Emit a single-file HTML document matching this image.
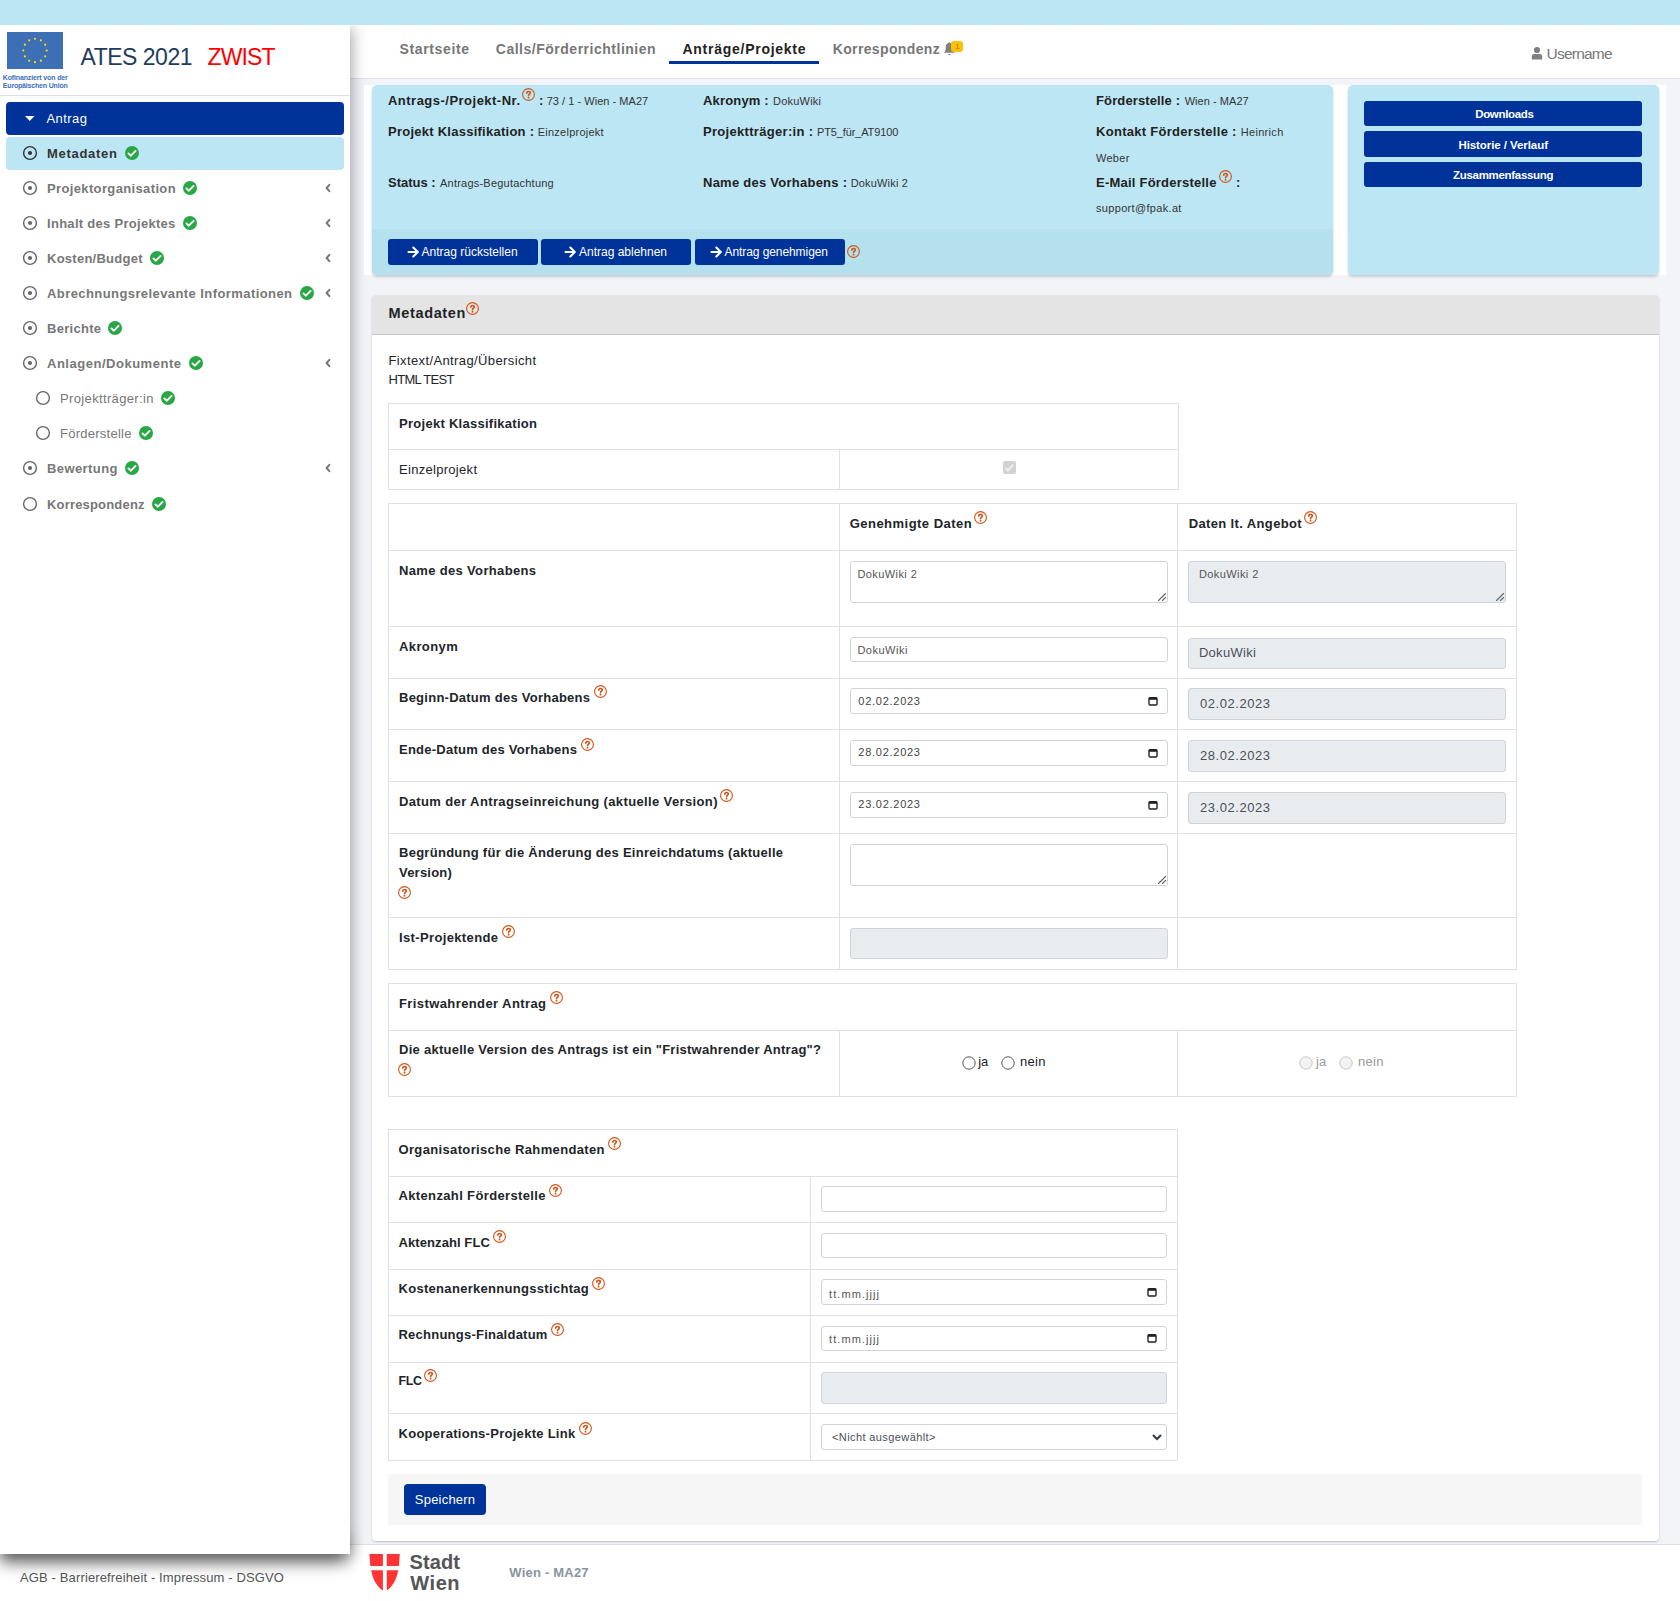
<!DOCTYPE html>
<html><head><meta charset="utf-8"><title>ATES 2021 ZWIST - Metadaten</title>
<style>
html,body{margin:0;padding:0}
body{width:1680px;height:1601px;position:relative;overflow:hidden;background:#f3f4f8;font-family:"Liberation Sans",sans-serif}
.t{position:absolute;white-space:nowrap;line-height:1}
svg{display:block}
</style></head><body>
<div style="position:absolute;left:0;top:0;width:1680px;height:25px;background:#bde6f5;z-index:5"></div><div style="position:absolute;left:0;top:24px;width:1680px;height:1px;z-index:6;background:repeating-linear-gradient(90deg,transparent 0 2px,#e9e3a6 2px 3px,transparent 3px 10px)"></div>
<div style="position:absolute;left:350px;top:25px;width:1330px;height:53px;background:#fff;border-bottom:1px solid #dee2e6"></div>
<div style="position:absolute;left:0px;top:1544px;width:1680px;height:57px;background:#fff;border-top:1px solid #dee2e6;box-sizing:border-box"></div>
<div style="position:absolute;left:364px;top:85px;width:1302px;height:190px;background:#fff"></div>
<div style="position:absolute;left:372px;top:85px;width:961px;height:190px;background:#bde6f5;border-radius:5px;box-shadow:0 2px 3px rgba(0,0,0,.18);overflow:hidden"></div>
<div style="position:absolute;left:372px;top:229px;width:961px;height:46px;background:#b5e0ee;border-radius:0 0 5px 5px"></div>
<div style="position:absolute;left:1348px;top:85px;width:311px;height:190px;background:#bde6f5;border-radius:5px;box-shadow:0 2px 3px rgba(0,0,0,.18)"></div>
<div style="position:absolute;left:372px;top:295px;width:1287px;height:1246px;background:#fff;border-radius:4px;box-shadow:0 1px 2px rgba(0,0,0,.22);"></div>
<div style="position:absolute;left:372px;top:295px;width:1287px;height:39px;background:#e4e4e4;border-bottom:1px solid #c9c9c9;border-radius:4px 4px 0 0"></div>
<div style="position:absolute;left:388px;top:1474px;width:1254px;height:51px;background:#f6f6f6"></div>
<div id="t0" class="t" style="left:388px;top:94.00px;font-size:13px;font-weight:700;color:#222;letter-spacing:0.484px;">Antrags-/Projekt-Nr.</div>
<div id="t1" class="t" style="left:546.7px;top:95.69px;font-size:11px;font-weight:400;color:#333;letter-spacing:0.033px;">73 / 1 - Wien - MA27</div>
<svg style="position:absolute;left:522.4px;top:87.7px;" width="13" height="13" viewBox="0 0 13 13"><circle cx="6.5" cy="6.5" r="5.9" fill="none" stroke="#d2581a" stroke-width="1.15"/><path d="M4.75,5.2 C4.75,4.1 5.5,3.45 6.5,3.45 C7.5,3.45 8.3,4.05 8.3,5 C8.3,6.15 6.55,6.35 6.55,7.75" fill="none" stroke="#d2581a" stroke-width="1.65" stroke-linecap="round"/><circle cx="6.55" cy="9.65" r="0.95" fill="#d2581a"/></svg>
<div id="t2" class="t" style="left:539px;top:94.00px;font-size:13px;font-weight:700;color:#222;letter-spacing:0.000px;">:</div>
<div id="t3" class="t" style="left:388px;top:125.00px;font-size:13px;font-weight:700;color:#222;letter-spacing:0.254px;">Projekt Klassifikation :</div>
<div id="t4" class="t" style="left:537.7px;top:126.69px;font-size:11px;font-weight:400;color:#333;letter-spacing:0.251px;">Einzelprojekt</div>
<div id="t5" class="t" style="left:388px;top:176.00px;font-size:13px;font-weight:700;color:#222;letter-spacing:-0.012px;">Status :</div>
<div id="t6" class="t" style="left:440px;top:177.69px;font-size:11px;font-weight:400;color:#333;letter-spacing:0.223px;">Antrags-Begutachtung</div>
<div id="t7" class="t" style="left:703px;top:94.00px;font-size:13px;font-weight:700;color:#222;letter-spacing:0.175px;">Akronym :</div>
<div id="t8" class="t" style="left:773px;top:95.69px;font-size:11px;font-weight:400;color:#333;letter-spacing:0.221px;">DokuWiki</div>
<div id="t9" class="t" style="left:703px;top:125.00px;font-size:13px;font-weight:700;color:#222;letter-spacing:0.309px;">Projektträger:in :</div>
<div id="t10" class="t" style="left:817px;top:126.69px;font-size:11px;font-weight:400;color:#333;letter-spacing:-0.128px;">PT5_für_AT9100</div>
<div id="t11" class="t" style="left:703px;top:176.00px;font-size:13px;font-weight:700;color:#222;letter-spacing:0.252px;">Name des Vorhabens :</div>
<div id="t12" class="t" style="left:850.7px;top:177.69px;font-size:11px;font-weight:400;color:#333;letter-spacing:0.175px;">DokuWiki 2</div>
<div id="t13" class="t" style="left:1096px;top:94.00px;font-size:13px;font-weight:700;color:#222;letter-spacing:0.126px;">Förderstelle :</div>
<div id="t14" class="t" style="left:1184.7px;top:95.69px;font-size:11px;font-weight:400;color:#333;letter-spacing:0.042px;">Wien - MA27</div>
<div id="t15" class="t" style="left:1096px;top:125.00px;font-size:13px;font-weight:700;color:#222;letter-spacing:0.288px;">Kontakt Förderstelle :</div>
<div id="t16" class="t" style="left:1240.7px;top:126.69px;font-size:11px;font-weight:400;color:#333;letter-spacing:0.320px;">Heinrich</div>
<div id="t17" class="t" style="left:1096px;top:152.69px;font-size:11px;font-weight:400;color:#333;letter-spacing:0.273px;">Weber</div>
<div id="t18" class="t" style="left:1096px;top:176.00px;font-size:13px;font-weight:700;color:#222;letter-spacing:0.227px;">E-Mail Förderstelle</div>
<svg style="position:absolute;left:1219.4px;top:169.7px;" width="13" height="13" viewBox="0 0 13 13"><circle cx="6.5" cy="6.5" r="5.9" fill="none" stroke="#d2581a" stroke-width="1.15"/><path d="M4.75,5.2 C4.75,4.1 5.5,3.45 6.5,3.45 C7.5,3.45 8.3,4.05 8.3,5 C8.3,6.15 6.55,6.35 6.55,7.75" fill="none" stroke="#d2581a" stroke-width="1.65" stroke-linecap="round"/><circle cx="6.55" cy="9.65" r="0.95" fill="#d2581a"/></svg>
<div id="t19" class="t" style="left:1236px;top:176.00px;font-size:13px;font-weight:700;color:#222;letter-spacing:0.000px;">:</div>
<div id="t20" class="t" style="left:1096px;top:202.69px;font-size:11px;font-weight:400;color:#333;letter-spacing:0.322px;">support@fpak.at</div>
<div style="position:absolute;left:388px;top:239px;width:150px;height:26px;background:#003399;border-radius:3px"></div>
<svg style="position:absolute;left:406.5px;top:245.5px;" width="13" height="12" viewBox="0 0 13 12"><path d="M1.5,6 H10.5 M6.3,1.6 L10.8,6 L6.3,10.4" fill="none" stroke="#fff" stroke-width="2.1" stroke-linecap="round" stroke-linejoin="round"/></svg>
<div id="t21" class="t" style="left:421.6px;top:245.84px;font-size:12px;font-weight:400;color:#fff;letter-spacing:-0.003px;">Antrag rückstellen</div>
<div style="position:absolute;left:541px;top:239px;width:150px;height:26px;background:#003399;border-radius:3px"></div>
<svg style="position:absolute;left:563.5px;top:245.5px;" width="13" height="12" viewBox="0 0 13 12"><path d="M1.5,6 H10.5 M6.3,1.6 L10.8,6 L6.3,10.4" fill="none" stroke="#fff" stroke-width="2.1" stroke-linecap="round" stroke-linejoin="round"/></svg>
<div id="t22" class="t" style="left:579px;top:245.84px;font-size:12px;font-weight:400;color:#fff;letter-spacing:-0.005px;">Antrag ablehnen</div>
<div style="position:absolute;left:695px;top:239px;width:150px;height:26px;background:#003399;border-radius:3px"></div>
<svg style="position:absolute;left:709.5px;top:245.5px;" width="13" height="12" viewBox="0 0 13 12"><path d="M1.5,6 H10.5 M6.3,1.6 L10.8,6 L6.3,10.4" fill="none" stroke="#fff" stroke-width="2.1" stroke-linecap="round" stroke-linejoin="round"/></svg>
<div id="t23" class="t" style="left:724.5px;top:245.84px;font-size:12px;font-weight:400;color:#fff;letter-spacing:-0.078px;">Antrag genehmigen</div>
<svg style="position:absolute;left:847.4px;top:244.7px;" width="13" height="13" viewBox="0 0 13 13"><circle cx="6.5" cy="6.5" r="5.9" fill="none" stroke="#d2581a" stroke-width="1.15"/><path d="M4.75,5.2 C4.75,4.1 5.5,3.45 6.5,3.45 C7.5,3.45 8.3,4.05 8.3,5 C8.3,6.15 6.55,6.35 6.55,7.75" fill="none" stroke="#d2581a" stroke-width="1.65" stroke-linecap="round"/><circle cx="6.55" cy="9.65" r="0.95" fill="#d2581a"/></svg>
<div style="position:absolute;left:1364px;top:101px;width:278px;height:25px;background:#003399;border-radius:3px"></div>
<div id="t24" class="t" style="left:1475.2px;top:109.07px;font-size:11.5px;font-weight:700;color:#fff;letter-spacing:-0.329px;">Downloads</div>
<div style="position:absolute;left:1364px;top:131px;width:278px;height:26px;background:#003399;border-radius:3px"></div>
<div id="t25" class="t" style="left:1458.4px;top:140.07px;font-size:11.5px;font-weight:700;color:#fff;letter-spacing:-0.068px;">Historie / Verlauf</div>
<div style="position:absolute;left:1364px;top:162px;width:278px;height:25px;background:#003399;border-radius:3px"></div>
<div id="t26" class="t" style="left:1453px;top:170.07px;font-size:11.5px;font-weight:700;color:#fff;letter-spacing:-0.301px;">Zusammenfassung</div>
<div id="t27" class="t" style="left:399.5px;top:42.15px;font-size:14px;font-weight:700;color:#777;letter-spacing:0.632px;">Startseite</div>
<div id="t28" class="t" style="left:495.8px;top:42.15px;font-size:14px;font-weight:700;color:#777;letter-spacing:0.509px;">Calls/Förderrichtlinien</div>
<div id="t29" class="t" style="left:682.5px;top:42.15px;font-size:14px;font-weight:700;color:#222;letter-spacing:0.731px;">Anträge/Projekte</div>
<div style="position:absolute;left:669px;top:61px;width:150px;height:3px;background:#003399"></div>
<div id="t30" class="t" style="left:832.7px;top:42.15px;font-size:14px;font-weight:700;color:#777;letter-spacing:0.360px;">Korrespondenz</div>
<svg style="position:absolute;left:943px;top:41px;" width="14" height="16" viewBox="0 0 14 16"><path d="M1,11.7 C2.6,10 2.8,8 2.8,6 C2.8,3.6 4.3,2.2 6,1.8 V1.2 H7 V1.8 C8.7,2.2 10.2,3.6 10.2,6 C10.2,8 10.4,10 12,11.7 Z" fill="#808080"/><path d="M5.2,13 H7.8 A1.3,1.3 0 0 1 5.2,13Z" fill="#808080"/></svg>
<div style="position:absolute;left:951px;top:41px;width:12px;height:11px;background:#ffc107;border-radius:3px"></div>
<div id="t31" class="t" style="left:955.2px;top:42.73px;font-size:8px;font-weight:400;color:#9a7a00;letter-spacing:0.000px;">1</div>
<svg style="position:absolute;left:1531px;top:45px;" width="12" height="15" viewBox="0 0 12 15"><circle cx="6" cy="5" r="3.1" fill="#808080"/><path d="M0.8,14.4 V11.6 C0.8,9.9 2,9.1 3.4,9.1 H8.6 C10,9.1 11.2,9.9 11.2,11.6 V14.4 Z" fill="#808080"/></svg>
<div id="t32" class="t" style="left:1546.6px;top:46.18px;font-size:15.5px;font-weight:400;color:#777;letter-spacing:-0.787px;">Username</div>
<div id="t33" class="t" style="left:388.6px;top:305.73px;font-size:14.5px;font-weight:700;color:#212529;letter-spacing:0.635px;">Metadaten</div>
<svg style="position:absolute;left:465.9px;top:301.7px;" width="13" height="13" viewBox="0 0 13 13"><circle cx="6.5" cy="6.5" r="5.9" fill="none" stroke="#d2581a" stroke-width="1.15"/><path d="M4.75,5.2 C4.75,4.1 5.5,3.45 6.5,3.45 C7.5,3.45 8.3,4.05 8.3,5 C8.3,6.15 6.55,6.35 6.55,7.75" fill="none" stroke="#d2581a" stroke-width="1.65" stroke-linecap="round"/><circle cx="6.55" cy="9.65" r="0.95" fill="#d2581a"/></svg>
<div id="t34" class="t" style="left:388.5px;top:354.00px;font-size:13px;font-weight:400;color:#212529;letter-spacing:0.382px;">Fixtext/Antrag/Übersicht</div>
<div id="t35" class="t" style="left:388.5px;top:373.00px;font-size:13px;font-weight:400;color:#212529;letter-spacing:-0.689px;">HTML TEST</div>
<div style="position:absolute;left:388px;top:403px;width:791px;height:87px;border:1px solid #dee2e6;box-sizing:border-box"></div>
<div style="position:absolute;left:388px;top:449px;width:791px;height:1px;background:#dee2e6"></div>
<div style="position:absolute;left:839px;top:449px;width:1px;height:41px;background:#dee2e6"></div>
<div id="t36" class="t" style="left:399px;top:417.00px;font-size:13px;font-weight:700;color:#212529;letter-spacing:0.275px;">Projekt Klassifikation</div>
<div id="t37" class="t" style="left:399px;top:463.00px;font-size:13px;font-weight:400;color:#212529;letter-spacing:0.297px;">Einzelprojekt</div>
<svg style="position:absolute;left:1003px;top:461px;" width="13" height="13" viewBox="0 0 13 13"><rect x="0" y="0" width="13" height="13" rx="2" fill="#d2d2d2"/><polyline points="2.4,7.1 4.9,9.6 10.3,3.5" fill="none" stroke="#efefef" stroke-width="2"/></svg>
<div style="position:absolute;left:388px;top:503px;width:1129px;height:467px;border:1px solid #dee2e6;box-sizing:border-box"></div>
<div style="position:absolute;left:388px;top:550px;width:1129px;height:1px;background:#dee2e6"></div>
<div style="position:absolute;left:388px;top:626px;width:1129px;height:1px;background:#dee2e6"></div>
<div style="position:absolute;left:388px;top:678px;width:1129px;height:1px;background:#dee2e6"></div>
<div style="position:absolute;left:388px;top:729px;width:1129px;height:1px;background:#dee2e6"></div>
<div style="position:absolute;left:388px;top:781px;width:1129px;height:1px;background:#dee2e6"></div>
<div style="position:absolute;left:388px;top:833px;width:1129px;height:1px;background:#dee2e6"></div>
<div style="position:absolute;left:388px;top:917px;width:1129px;height:1px;background:#dee2e6"></div>
<div style="position:absolute;left:839px;top:503px;width:1px;height:467px;background:#dee2e6"></div>
<div style="position:absolute;left:1177px;top:503px;width:1px;height:467px;background:#dee2e6"></div>
<div id="t38" class="t" style="left:849.7px;top:516.60px;font-size:13px;font-weight:700;color:#212529;letter-spacing:0.475px;">Genehmigte Daten</div>
<svg style="position:absolute;left:974.4px;top:510.7px;" width="13" height="13" viewBox="0 0 13 13"><circle cx="6.5" cy="6.5" r="5.9" fill="none" stroke="#d2581a" stroke-width="1.15"/><path d="M4.75,5.2 C4.75,4.1 5.5,3.45 6.5,3.45 C7.5,3.45 8.3,4.05 8.3,5 C8.3,6.15 6.55,6.35 6.55,7.75" fill="none" stroke="#d2581a" stroke-width="1.65" stroke-linecap="round"/><circle cx="6.55" cy="9.65" r="0.95" fill="#d2581a"/></svg>
<div id="t39" class="t" style="left:1188.7px;top:516.60px;font-size:13px;font-weight:700;color:#212529;letter-spacing:0.367px;">Daten lt. Angebot</div>
<svg style="position:absolute;left:1304.4px;top:510.7px;" width="13" height="13" viewBox="0 0 13 13"><circle cx="6.5" cy="6.5" r="5.9" fill="none" stroke="#d2581a" stroke-width="1.15"/><path d="M4.75,5.2 C4.75,4.1 5.5,3.45 6.5,3.45 C7.5,3.45 8.3,4.05 8.3,5 C8.3,6.15 6.55,6.35 6.55,7.75" fill="none" stroke="#d2581a" stroke-width="1.65" stroke-linecap="round"/><circle cx="6.55" cy="9.65" r="0.95" fill="#d2581a"/></svg>
<div id="t40" class="t" style="left:399px;top:564.00px;font-size:13px;font-weight:700;color:#212529;letter-spacing:0.338px;">Name des Vorhabens</div>
<div style="position:absolute;left:850px;top:561px;width:318px;height:42px;background:#fff;border:1px solid #ced4da;border-radius:3px;box-sizing:border-box"></div>
<svg style="position:absolute;left:1156px;top:591px;" width="12" height="12" viewBox="0 0 12 12"><path d="M2.5,9.5 L9.6,2.5 M6.4,9.5 L9.6,6.5" stroke="#666" stroke-width="1.1" stroke-linecap="round"/></svg>
<div id="t41" class="t" style="left:857.4px;top:569.09px;font-size:11px;font-weight:400;color:#555;letter-spacing:0.419px;">DokuWiki 2</div>
<div style="position:absolute;left:1188px;top:561px;width:318px;height:42px;background:#e9ecef;border:1px solid #ced4da;border-radius:3px;box-sizing:border-box"></div>
<svg style="position:absolute;left:1494px;top:591px;" width="12" height="12" viewBox="0 0 12 12"><path d="M2.5,9.5 L9.6,2.5 M6.4,9.5 L9.6,6.5" stroke="#666" stroke-width="1.1" stroke-linecap="round"/></svg>
<div id="t42" class="t" style="left:1198.9px;top:569.09px;font-size:11px;font-weight:400;color:#555;letter-spacing:0.419px;">DokuWiki 2</div>
<div id="t43" class="t" style="left:399px;top:639.70px;font-size:13px;font-weight:700;color:#212529;letter-spacing:0.391px;">Akronym</div>
<div style="position:absolute;left:850px;top:637px;width:318px;height:25px;background:#fff;border:1px solid #ced4da;border-radius:3px;box-sizing:border-box"></div>
<div id="t44" class="t" style="left:857.4px;top:645.39px;font-size:11px;font-weight:400;color:#555;letter-spacing:0.507px;">DokuWiki</div>
<div style="position:absolute;left:1188px;top:638px;width:318px;height:31px;background:#e9ecef;border:1px solid #ced4da;border-radius:3px;box-sizing:border-box"></div>
<div id="t45" class="t" style="left:1198.9px;top:646.30px;font-size:13px;font-weight:400;color:#495057;letter-spacing:0.299px;">DokuWiki</div>
<div id="t46" class="t" style="left:399px;top:690.60px;font-size:13px;font-weight:700;color:#212529;letter-spacing:0.253px;">Beginn-Datum des Vorhabens</div>
<svg style="position:absolute;left:594.1999999999999px;top:685.3000000000001px;" width="13" height="13" viewBox="0 0 13 13"><circle cx="6.5" cy="6.5" r="5.9" fill="none" stroke="#d2581a" stroke-width="1.15"/><path d="M4.75,5.2 C4.75,4.1 5.5,3.45 6.5,3.45 C7.5,3.45 8.3,4.05 8.3,5 C8.3,6.15 6.55,6.35 6.55,7.75" fill="none" stroke="#d2581a" stroke-width="1.65" stroke-linecap="round"/><circle cx="6.55" cy="9.65" r="0.95" fill="#d2581a"/></svg>
<div style="position:absolute;left:850px;top:688px;width:318px;height:26px;background:#fff;border:1px solid #ced4da;border-radius:3px;box-sizing:border-box"></div>
<svg style="position:absolute;left:1147.5px;top:695.5px;" width="10" height="10" viewBox="0 0 10 10"><rect x="1" y="1.8" width="8" height="7.2" rx="1" fill="none" stroke="#222" stroke-width="1.4"/><rect x="1" y="1.8" width="8" height="2" fill="#222"/></svg>
<div id="t47" class="t" style="left:858.3px;top:696.49px;font-size:11px;font-weight:400;color:#444;letter-spacing:0.738px;">02.02.2023</div>
<div style="position:absolute;left:1188px;top:688px;width:318px;height:32px;background:#e9ecef;border:1px solid #ced4da;border-radius:3px;box-sizing:border-box"></div>
<div id="t48" class="t" style="left:1200px;top:697.30px;font-size:13px;font-weight:400;color:#495057;letter-spacing:0.547px;">02.02.2023</div>
<div id="t49" class="t" style="left:399px;top:743.00px;font-size:13px;font-weight:700;color:#212529;letter-spacing:0.243px;">Ende-Datum des Vorhabens</div>
<svg style="position:absolute;left:580.9px;top:737.7px;" width="13" height="13" viewBox="0 0 13 13"><circle cx="6.5" cy="6.5" r="5.9" fill="none" stroke="#d2581a" stroke-width="1.15"/><path d="M4.75,5.2 C4.75,4.1 5.5,3.45 6.5,3.45 C7.5,3.45 8.3,4.05 8.3,5 C8.3,6.15 6.55,6.35 6.55,7.75" fill="none" stroke="#d2581a" stroke-width="1.65" stroke-linecap="round"/><circle cx="6.55" cy="9.65" r="0.95" fill="#d2581a"/></svg>
<div style="position:absolute;left:850px;top:740px;width:318px;height:26px;background:#fff;border:1px solid #ced4da;border-radius:3px;box-sizing:border-box"></div>
<svg style="position:absolute;left:1147.5px;top:747.5px;" width="10" height="10" viewBox="0 0 10 10"><rect x="1" y="1.8" width="8" height="7.2" rx="1" fill="none" stroke="#222" stroke-width="1.4"/><rect x="1" y="1.8" width="8" height="2" fill="#222"/></svg>
<div id="t50" class="t" style="left:858.3px;top:747.39px;font-size:11px;font-weight:400;color:#444;letter-spacing:0.738px;">28.02.2023</div>
<div style="position:absolute;left:1188px;top:740px;width:318px;height:32px;background:#e9ecef;border:1px solid #ced4da;border-radius:3px;box-sizing:border-box"></div>
<div id="t51" class="t" style="left:1200px;top:749.00px;font-size:13px;font-weight:400;color:#495057;letter-spacing:0.547px;">28.02.2023</div>
<div id="t52" class="t" style="left:399px;top:794.70px;font-size:13px;font-weight:700;color:#212529;letter-spacing:0.370px;">Datum der Antragseinreichung (aktuelle Version)</div>
<svg style="position:absolute;left:720.4px;top:789.4000000000001px;" width="13" height="13" viewBox="0 0 13 13"><circle cx="6.5" cy="6.5" r="5.9" fill="none" stroke="#d2581a" stroke-width="1.15"/><path d="M4.75,5.2 C4.75,4.1 5.5,3.45 6.5,3.45 C7.5,3.45 8.3,4.05 8.3,5 C8.3,6.15 6.55,6.35 6.55,7.75" fill="none" stroke="#d2581a" stroke-width="1.65" stroke-linecap="round"/><circle cx="6.55" cy="9.65" r="0.95" fill="#d2581a"/></svg>
<div style="position:absolute;left:850px;top:792px;width:318px;height:26px;background:#fff;border:1px solid #ced4da;border-radius:3px;box-sizing:border-box"></div>
<svg style="position:absolute;left:1147.5px;top:799.5px;" width="10" height="10" viewBox="0 0 10 10"><rect x="1" y="1.8" width="8" height="7.2" rx="1" fill="none" stroke="#222" stroke-width="1.4"/><rect x="1" y="1.8" width="8" height="2" fill="#222"/></svg>
<div id="t53" class="t" style="left:858.3px;top:799.44px;font-size:11px;font-weight:400;color:#444;letter-spacing:0.738px;">23.02.2023</div>
<div style="position:absolute;left:1188px;top:792px;width:318px;height:32px;background:#e9ecef;border:1px solid #ced4da;border-radius:3px;box-sizing:border-box"></div>
<div id="t54" class="t" style="left:1200px;top:800.70px;font-size:13px;font-weight:400;color:#495057;letter-spacing:0.547px;">23.02.2023</div>
<div id="t55" class="t" style="left:399px;top:846.30px;font-size:13px;font-weight:700;color:#212529;letter-spacing:0.271px;">Begründung für die Änderung des Einreichdatums (aktuelle</div>
<div id="t56" class="t" style="left:399px;top:865.50px;font-size:13px;font-weight:700;color:#212529;letter-spacing:0.215px;">Version)</div>
<svg style="position:absolute;left:397.9px;top:886.2px;" width="13" height="13" viewBox="0 0 13 13"><circle cx="6.5" cy="6.5" r="5.9" fill="none" stroke="#d2581a" stroke-width="1.15"/><path d="M4.75,5.2 C4.75,4.1 5.5,3.45 6.5,3.45 C7.5,3.45 8.3,4.05 8.3,5 C8.3,6.15 6.55,6.35 6.55,7.75" fill="none" stroke="#d2581a" stroke-width="1.65" stroke-linecap="round"/><circle cx="6.55" cy="9.65" r="0.95" fill="#d2581a"/></svg>
<div style="position:absolute;left:850px;top:844px;width:318px;height:42px;background:#fff;border:1px solid #ced4da;border-radius:3px;box-sizing:border-box"></div>
<svg style="position:absolute;left:1156px;top:874px;" width="12" height="12" viewBox="0 0 12 12"><path d="M2.5,9.5 L9.6,2.5 M6.4,9.5 L9.6,6.5" stroke="#666" stroke-width="1.1" stroke-linecap="round"/></svg>
<div id="t57" class="t" style="left:399px;top:930.50px;font-size:13px;font-weight:700;color:#212529;letter-spacing:0.363px;">Ist-Projektende</div>
<svg style="position:absolute;left:501.9px;top:925.2px;" width="13" height="13" viewBox="0 0 13 13"><circle cx="6.5" cy="6.5" r="5.9" fill="none" stroke="#d2581a" stroke-width="1.15"/><path d="M4.75,5.2 C4.75,4.1 5.5,3.45 6.5,3.45 C7.5,3.45 8.3,4.05 8.3,5 C8.3,6.15 6.55,6.35 6.55,7.75" fill="none" stroke="#d2581a" stroke-width="1.65" stroke-linecap="round"/><circle cx="6.55" cy="9.65" r="0.95" fill="#d2581a"/></svg>
<div style="position:absolute;left:850px;top:928px;width:318px;height:31px;background:#e9ecef;border:1px solid #ced4da;border-radius:3px;box-sizing:border-box"></div>
<div style="position:absolute;left:388px;top:983px;width:1129px;height:114px;border:1px solid #dee2e6;box-sizing:border-box"></div>
<div style="position:absolute;left:388px;top:1030px;width:1129px;height:1px;background:#dee2e6"></div>
<div style="position:absolute;left:839px;top:1030px;width:1px;height:67px;background:#dee2e6"></div>
<div style="position:absolute;left:1177px;top:1030px;width:1px;height:67px;background:#dee2e6"></div>
<div id="t58" class="t" style="left:399px;top:996.80px;font-size:13px;font-weight:700;color:#212529;letter-spacing:0.403px;">Fristwahrender Antrag</div>
<svg style="position:absolute;left:550.4px;top:991.2px;" width="13" height="13" viewBox="0 0 13 13"><circle cx="6.5" cy="6.5" r="5.9" fill="none" stroke="#d2581a" stroke-width="1.15"/><path d="M4.75,5.2 C4.75,4.1 5.5,3.45 6.5,3.45 C7.5,3.45 8.3,4.05 8.3,5 C8.3,6.15 6.55,6.35 6.55,7.75" fill="none" stroke="#d2581a" stroke-width="1.65" stroke-linecap="round"/><circle cx="6.55" cy="9.65" r="0.95" fill="#d2581a"/></svg>
<div id="t59" class="t" style="left:399px;top:1042.70px;font-size:13px;font-weight:700;color:#212529;letter-spacing:0.264px;">Die aktuelle Version des Antrags ist ein "Fristwahrender Antrag"?</div>
<svg style="position:absolute;left:397.9px;top:1062.7px;" width="13" height="13" viewBox="0 0 13 13"><circle cx="6.5" cy="6.5" r="5.9" fill="none" stroke="#d2581a" stroke-width="1.15"/><path d="M4.75,5.2 C4.75,4.1 5.5,3.45 6.5,3.45 C7.5,3.45 8.3,4.05 8.3,5 C8.3,6.15 6.55,6.35 6.55,7.75" fill="none" stroke="#d2581a" stroke-width="1.65" stroke-linecap="round"/><circle cx="6.55" cy="9.65" r="0.95" fill="#d2581a"/></svg>
<svg style="position:absolute;left:961.6px;top:1055.5px;" width="14" height="14" viewBox="0 0 14 14"><circle cx="7" cy="7" r="6.2" fill="#fff" stroke="#555" stroke-width="1"/></svg>
<div id="t60" class="t" style="left:978.2px;top:1054.70px;font-size:13px;font-weight:400;color:#212529;letter-spacing:0.000px;">ja</div>
<svg style="position:absolute;left:1001.4px;top:1055.5px;" width="14" height="14" viewBox="0 0 14 14"><circle cx="7" cy="7" r="6.2" fill="#fff" stroke="#555" stroke-width="1"/></svg>
<div id="t61" class="t" style="left:1020px;top:1054.70px;font-size:13px;font-weight:400;color:#212529;letter-spacing:0.273px;">nein</div>
<svg style="position:absolute;left:1298.6px;top:1055.5px;" width="14" height="14" viewBox="0 0 14 14"><circle cx="7" cy="7" r="6.2" fill="#f2f2f2" stroke="#c8c8c8" stroke-width="1"/></svg>
<div id="t62" class="t" style="left:1316px;top:1054.70px;font-size:13px;font-weight:400;color:#999;letter-spacing:0.000px;">ja</div>
<svg style="position:absolute;left:1339.4px;top:1055.5px;" width="14" height="14" viewBox="0 0 14 14"><circle cx="7" cy="7" r="6.2" fill="#f2f2f2" stroke="#c8c8c8" stroke-width="1"/></svg>
<div id="t63" class="t" style="left:1358px;top:1054.70px;font-size:13px;font-weight:400;color:#999;letter-spacing:0.273px;">nein</div>
<div style="position:absolute;left:388px;top:1129px;width:790px;height:332px;border:1px solid #dee2e6;box-sizing:border-box"></div>
<div style="position:absolute;left:388px;top:1176px;width:790px;height:1px;background:#dee2e6"></div>
<div style="position:absolute;left:388px;top:1222px;width:790px;height:1px;background:#dee2e6"></div>
<div style="position:absolute;left:388px;top:1269px;width:790px;height:1px;background:#dee2e6"></div>
<div style="position:absolute;left:388px;top:1315px;width:790px;height:1px;background:#dee2e6"></div>
<div style="position:absolute;left:388px;top:1362px;width:790px;height:1px;background:#dee2e6"></div>
<div style="position:absolute;left:388px;top:1413px;width:790px;height:1px;background:#dee2e6"></div>
<div style="position:absolute;left:810px;top:1176px;width:1px;height:285px;background:#dee2e6"></div>
<div id="t64" class="t" style="left:398.5px;top:1142.90px;font-size:13px;font-weight:700;color:#212529;letter-spacing:0.352px;">Organisatorische Rahmendaten</div>
<svg style="position:absolute;left:608.4px;top:1137.2px;" width="13" height="13" viewBox="0 0 13 13"><circle cx="6.5" cy="6.5" r="5.9" fill="none" stroke="#d2581a" stroke-width="1.15"/><path d="M4.75,5.2 C4.75,4.1 5.5,3.45 6.5,3.45 C7.5,3.45 8.3,4.05 8.3,5 C8.3,6.15 6.55,6.35 6.55,7.75" fill="none" stroke="#d2581a" stroke-width="1.65" stroke-linecap="round"/><circle cx="6.55" cy="9.65" r="0.95" fill="#d2581a"/></svg>
<div id="t65" class="t" style="left:398.5px;top:1189.30px;font-size:13px;font-weight:700;color:#212529;letter-spacing:0.360px;">Aktenzahl Förderstelle</div>
<svg style="position:absolute;left:549.1999999999999px;top:1184.0px;" width="13" height="13" viewBox="0 0 13 13"><circle cx="6.5" cy="6.5" r="5.9" fill="none" stroke="#d2581a" stroke-width="1.15"/><path d="M4.75,5.2 C4.75,4.1 5.5,3.45 6.5,3.45 C7.5,3.45 8.3,4.05 8.3,5 C8.3,6.15 6.55,6.35 6.55,7.75" fill="none" stroke="#d2581a" stroke-width="1.65" stroke-linecap="round"/><circle cx="6.55" cy="9.65" r="0.95" fill="#d2581a"/></svg>
<div id="t66" class="t" style="left:398.5px;top:1235.60px;font-size:13px;font-weight:700;color:#212529;letter-spacing:0.085px;">Aktenzahl FLC</div>
<svg style="position:absolute;left:493.09999999999997px;top:1230.3px;" width="13" height="13" viewBox="0 0 13 13"><circle cx="6.5" cy="6.5" r="5.9" fill="none" stroke="#d2581a" stroke-width="1.15"/><path d="M4.75,5.2 C4.75,4.1 5.5,3.45 6.5,3.45 C7.5,3.45 8.3,4.05 8.3,5 C8.3,6.15 6.55,6.35 6.55,7.75" fill="none" stroke="#d2581a" stroke-width="1.65" stroke-linecap="round"/><circle cx="6.55" cy="9.65" r="0.95" fill="#d2581a"/></svg>
<div id="t67" class="t" style="left:398.5px;top:1282.00px;font-size:13px;font-weight:700;color:#212529;letter-spacing:0.301px;">Kostenanerkennungsstichtag</div>
<svg style="position:absolute;left:592.4px;top:1276.7px;" width="13" height="13" viewBox="0 0 13 13"><circle cx="6.5" cy="6.5" r="5.9" fill="none" stroke="#d2581a" stroke-width="1.15"/><path d="M4.75,5.2 C4.75,4.1 5.5,3.45 6.5,3.45 C7.5,3.45 8.3,4.05 8.3,5 C8.3,6.15 6.55,6.35 6.55,7.75" fill="none" stroke="#d2581a" stroke-width="1.65" stroke-linecap="round"/><circle cx="6.55" cy="9.65" r="0.95" fill="#d2581a"/></svg>
<div id="t68" class="t" style="left:398.5px;top:1328.40px;font-size:13px;font-weight:700;color:#212529;letter-spacing:0.234px;">Rechnungs-Finaldatum</div>
<svg style="position:absolute;left:551.1999999999999px;top:1323.1000000000001px;" width="13" height="13" viewBox="0 0 13 13"><circle cx="6.5" cy="6.5" r="5.9" fill="none" stroke="#d2581a" stroke-width="1.15"/><path d="M4.75,5.2 C4.75,4.1 5.5,3.45 6.5,3.45 C7.5,3.45 8.3,4.05 8.3,5 C8.3,6.15 6.55,6.35 6.55,7.75" fill="none" stroke="#d2581a" stroke-width="1.65" stroke-linecap="round"/><circle cx="6.55" cy="9.65" r="0.95" fill="#d2581a"/></svg>
<div id="t69" class="t" style="left:398.5px;top:1375.20px;font-size:12.4px;font-weight:700;color:#212529;letter-spacing:-0.300px;">FLC</div>
<svg style="position:absolute;left:424.4px;top:1369.4px;" width="13" height="13" viewBox="0 0 13 13"><circle cx="6.5" cy="6.5" r="5.9" fill="none" stroke="#d2581a" stroke-width="1.15"/><path d="M4.75,5.2 C4.75,4.1 5.5,3.45 6.5,3.45 C7.5,3.45 8.3,4.05 8.3,5 C8.3,6.15 6.55,6.35 6.55,7.75" fill="none" stroke="#d2581a" stroke-width="1.65" stroke-linecap="round"/><circle cx="6.55" cy="9.65" r="0.95" fill="#d2581a"/></svg>
<div id="t70" class="t" style="left:398.5px;top:1427.00px;font-size:13px;font-weight:700;color:#212529;letter-spacing:0.278px;">Kooperations-Projekte Link</div>
<svg style="position:absolute;left:579.4px;top:1421.7px;" width="13" height="13" viewBox="0 0 13 13"><circle cx="6.5" cy="6.5" r="5.9" fill="none" stroke="#d2581a" stroke-width="1.15"/><path d="M4.75,5.2 C4.75,4.1 5.5,3.45 6.5,3.45 C7.5,3.45 8.3,4.05 8.3,5 C8.3,6.15 6.55,6.35 6.55,7.75" fill="none" stroke="#d2581a" stroke-width="1.65" stroke-linecap="round"/><circle cx="6.55" cy="9.65" r="0.95" fill="#d2581a"/></svg>
<div style="position:absolute;left:821px;top:1186px;width:346px;height:26px;background:#fff;border:1px solid #ced4da;border-radius:3px;box-sizing:border-box"></div>
<div style="position:absolute;left:821px;top:1233px;width:346px;height:25px;background:#fff;border:1px solid #ced4da;border-radius:3px;box-sizing:border-box"></div>
<div style="position:absolute;left:821px;top:1279px;width:346px;height:26px;background:#fff;border:1px solid #ced4da;border-radius:3px;box-sizing:border-box"></div>
<svg style="position:absolute;left:1147px;top:1286.5px;" width="10" height="10" viewBox="0 0 10 10"><rect x="1" y="1.8" width="8" height="7.2" rx="1" fill="none" stroke="#222" stroke-width="1.4"/><rect x="1" y="1.8" width="8" height="2" fill="#222"/></svg>
<div id="t71" class="t" style="left:829px;top:1288.59px;font-size:11px;font-weight:400;color:#555;letter-spacing:1.075px;">tt.mm.jjjj</div>
<div style="position:absolute;left:821px;top:1326px;width:346px;height:25px;background:#fff;border:1px solid #ced4da;border-radius:3px;box-sizing:border-box"></div>
<svg style="position:absolute;left:1147px;top:1333px;" width="10" height="10" viewBox="0 0 10 10"><rect x="1" y="1.8" width="8" height="7.2" rx="1" fill="none" stroke="#222" stroke-width="1.4"/><rect x="1" y="1.8" width="8" height="2" fill="#222"/></svg>
<div id="t72" class="t" style="left:829px;top:1333.99px;font-size:11px;font-weight:400;color:#555;letter-spacing:1.075px;">tt.mm.jjjj</div>
<div style="position:absolute;left:821px;top:1372px;width:346px;height:32px;background:#e9ecef;border:1px solid #ced4da;border-radius:3px;box-sizing:border-box"></div>
<div style="position:absolute;left:821px;top:1424px;width:346px;height:26px;background:#fff;border:1px solid #ced4da;border-radius:3px;box-sizing:border-box"></div>
<div id="t73" class="t" style="left:832px;top:1431.59px;font-size:11px;font-weight:400;color:#495057;letter-spacing:0.399px;">&lt;Nicht ausgewählt&gt;</div>
<svg style="position:absolute;left:1151px;top:1432px;" width="12" height="10" viewBox="0 0 12 10"><polyline points="2,3 6,7 10,3" fill="none" stroke="#343a40" stroke-width="2"/></svg>
<div style="position:absolute;left:404px;top:1484px;width:82px;height:31px;background:#003399;border-radius:4px"></div>
<div id="t74" class="t" style="left:414.8px;top:1493.00px;font-size:13px;font-weight:400;color:#fff;letter-spacing:0.219px;">Speichern</div>
<div id="t75" class="t" style="left:20px;top:1571.00px;font-size:13px;font-weight:400;color:#555;letter-spacing:0.131px;">AGB - Barrierefreiheit - Impressum - DSGVO</div>
<svg style="position:absolute;left:364px;top:1548px;" width="40" height="48" viewBox="0 0 40 48"><path fill="#ff3333" d="M5.4,6 L18.9,6 L18.9,18 L6.3,18 Z M22.8,6 L35.8,6 L34.9,18 L22.8,18 Z M7.2,22.2 L18.9,22.2 L18.9,42.6 C13,38.5 8.8,31.5 7.2,22.2 Z M22.8,22.2 L34.2,22.2 C32.6,31.5 28.6,38.5 22.8,42.6 Z"/></svg>
<div id="t76" class="t" style="left:409.6px;top:1552.07px;font-size:20px;font-weight:700;color:#555;letter-spacing:0.100px;">Stadt</div>
<div id="t77" class="t" style="left:410.2px;top:1572.57px;font-size:20px;font-weight:700;color:#555;letter-spacing:0.600px;">Wien</div>
<div id="t78" class="t" style="left:509.3px;top:1565.50px;font-size:13px;font-weight:700;color:#8a949e;letter-spacing:0.213px;">Wien - MA27</div>
<div style="position:absolute;left:0px;top:1535px;width:346px;height:28px;background:rgba(0,0,0,.48);filter:blur(8px)"></div>
<div style="position:absolute;left:0;top:25px;width:350px;height:1529px;background:#fff;box-shadow:2px 3px 14px rgba(0,0,0,.35)">
<svg style="position:absolute;left:7px;top:32px;top:7px" width="56" height="37" viewBox="0 0 56 37"><rect width="56" height="37" fill="#3d6fb6"/><circle cx="39.70" cy="18.50" r="1.1" fill="#ffdd00"/><circle cx="38.13" cy="24.35" r="1.1" fill="#ffdd00"/><circle cx="33.85" cy="28.63" r="1.1" fill="#ffdd00"/><circle cx="28.00" cy="30.20" r="1.1" fill="#ffdd00"/><circle cx="22.15" cy="28.63" r="1.1" fill="#ffdd00"/><circle cx="17.87" cy="24.35" r="1.1" fill="#ffdd00"/><circle cx="16.30" cy="18.50" r="1.1" fill="#ffdd00"/><circle cx="17.87" cy="12.65" r="1.1" fill="#ffdd00"/><circle cx="22.15" cy="8.37" r="1.1" fill="#ffdd00"/><circle cx="28.00" cy="6.80" r="1.1" fill="#ffdd00"/><circle cx="33.85" cy="8.37" r="1.1" fill="#ffdd00"/><circle cx="38.13" cy="12.65" r="1.1" fill="#ffdd00"/></svg>
</div>
<div id="t79" class="t" style="left:2.8px;top:74.07px;font-size:7px;font-weight:700;color:#3d6fb6;letter-spacing:-0.141px;">Kofinanziert von der</div>
<div id="t80" class="t" style="left:2.8px;top:82.07px;font-size:7px;font-weight:700;color:#3d6fb6;letter-spacing:-0.180px;">Europäischen Union</div>
<div id="t81" class="t" style="left:80.5px;top:45.53px;font-size:23px;font-weight:400;color:#1f3b5e;letter-spacing:-0.491px;">ATES 2021</div>
<div id="t82" class="t" style="left:207.5px;top:45.53px;font-size:23px;font-weight:400;color:#ff0000;letter-spacing:-0.885px;">ZWIST</div>
<div style="position:absolute;left:0px;top:95px;width:350px;height:1px;background:#dee2e6"></div>
<div style="position:absolute;left:6px;top:102px;width:338px;height:33px;background:#003399;border-radius:4px"></div>
<svg style="position:absolute;left:24px;top:114px;" width="12" height="8" viewBox="0 0 12 8"><polygon points="1,2 10.5,2 5.75,7" fill="#fff"/></svg>
<div id="t83" class="t" style="left:46.4px;top:111.70px;font-size:13px;font-weight:400;color:#fff;letter-spacing:0.438px;">Antrag</div>
<div style="position:absolute;left:6px;top:137px;width:338px;height:33px;background:#bde6f5;border-radius:4px"></div>
<svg style="position:absolute;left:22px;top:144.5px;" width="16" height="16" viewBox="0 0 16 16"><circle cx="8" cy="8" r="6.4" fill="none" stroke="#333" stroke-width="1.4"/><circle cx="8" cy="8" r="2.1" fill="#333"/></svg>
<div id="t84" class="t" style="left:47px;top:147.00px;font-size:13px;font-weight:700;color:#333;letter-spacing:0.713px;">Metadaten</div>
<svg style="position:absolute;left:125px;top:145.5px;" width="14" height="14" viewBox="0 0 14 14"><circle cx="7" cy="7" r="7" fill="#28a745"/><polyline points="3.4,7.4 5.9,9.7 10.6,4.9" fill="none" stroke="#fff" stroke-width="1.9" stroke-linecap="round" stroke-linejoin="round"/></svg>
<svg style="position:absolute;left:22px;top:179.5px;" width="16" height="16" viewBox="0 0 16 16"><circle cx="8" cy="8" r="6.4" fill="none" stroke="#666" stroke-width="1.4"/><circle cx="8" cy="8" r="2.1" fill="#666"/></svg>
<div id="t85" class="t" style="left:47px;top:182.00px;font-size:13px;font-weight:700;color:#777;letter-spacing:0.362px;">Projektorganisation</div>
<svg style="position:absolute;left:183.3px;top:180.5px;" width="14" height="14" viewBox="0 0 14 14"><circle cx="7" cy="7" r="7" fill="#28a745"/><polyline points="3.4,7.4 5.9,9.7 10.6,4.9" fill="none" stroke="#fff" stroke-width="1.9" stroke-linecap="round" stroke-linejoin="round"/></svg>
<svg style="position:absolute;left:322px;top:181.5px;" width="12" height="12" viewBox="0 0 12 12"><polyline points="7.4,2.8 4.6,6 7.4,9.2" fill="none" stroke="#777" stroke-width="2" stroke-linecap="round" stroke-linejoin="round"/></svg>
<svg style="position:absolute;left:22px;top:214.5px;" width="16" height="16" viewBox="0 0 16 16"><circle cx="8" cy="8" r="6.4" fill="none" stroke="#666" stroke-width="1.4"/><circle cx="8" cy="8" r="2.1" fill="#666"/></svg>
<div id="t86" class="t" style="left:47px;top:217.00px;font-size:13px;font-weight:700;color:#777;letter-spacing:0.288px;">Inhalt des Projektes</div>
<svg style="position:absolute;left:183px;top:215.5px;" width="14" height="14" viewBox="0 0 14 14"><circle cx="7" cy="7" r="7" fill="#28a745"/><polyline points="3.4,7.4 5.9,9.7 10.6,4.9" fill="none" stroke="#fff" stroke-width="1.9" stroke-linecap="round" stroke-linejoin="round"/></svg>
<svg style="position:absolute;left:322px;top:216.5px;" width="12" height="12" viewBox="0 0 12 12"><polyline points="7.4,2.8 4.6,6 7.4,9.2" fill="none" stroke="#777" stroke-width="2" stroke-linecap="round" stroke-linejoin="round"/></svg>
<svg style="position:absolute;left:22px;top:249.5px;" width="16" height="16" viewBox="0 0 16 16"><circle cx="8" cy="8" r="6.4" fill="none" stroke="#666" stroke-width="1.4"/><circle cx="8" cy="8" r="2.1" fill="#666"/></svg>
<div id="t87" class="t" style="left:47px;top:252.00px;font-size:13px;font-weight:700;color:#777;letter-spacing:0.254px;">Kosten/Budget</div>
<svg style="position:absolute;left:150px;top:250.5px;" width="14" height="14" viewBox="0 0 14 14"><circle cx="7" cy="7" r="7" fill="#28a745"/><polyline points="3.4,7.4 5.9,9.7 10.6,4.9" fill="none" stroke="#fff" stroke-width="1.9" stroke-linecap="round" stroke-linejoin="round"/></svg>
<svg style="position:absolute;left:322px;top:251.5px;" width="12" height="12" viewBox="0 0 12 12"><polyline points="7.4,2.8 4.6,6 7.4,9.2" fill="none" stroke="#777" stroke-width="2" stroke-linecap="round" stroke-linejoin="round"/></svg>
<svg style="position:absolute;left:22px;top:284.5px;" width="16" height="16" viewBox="0 0 16 16"><circle cx="8" cy="8" r="6.4" fill="none" stroke="#666" stroke-width="1.4"/><circle cx="8" cy="8" r="2.1" fill="#666"/></svg>
<div id="t88" class="t" style="left:47px;top:287.00px;font-size:13px;font-weight:700;color:#777;letter-spacing:0.419px;">Abrechnungsrelevante Informationen</div>
<svg style="position:absolute;left:300px;top:285.5px;" width="14" height="14" viewBox="0 0 14 14"><circle cx="7" cy="7" r="7" fill="#28a745"/><polyline points="3.4,7.4 5.9,9.7 10.6,4.9" fill="none" stroke="#fff" stroke-width="1.9" stroke-linecap="round" stroke-linejoin="round"/></svg>
<svg style="position:absolute;left:322px;top:286.5px;" width="12" height="12" viewBox="0 0 12 12"><polyline points="7.4,2.8 4.6,6 7.4,9.2" fill="none" stroke="#777" stroke-width="2" stroke-linecap="round" stroke-linejoin="round"/></svg>
<svg style="position:absolute;left:22px;top:319.5px;" width="16" height="16" viewBox="0 0 16 16"><circle cx="8" cy="8" r="6.4" fill="none" stroke="#666" stroke-width="1.4"/><circle cx="8" cy="8" r="2.1" fill="#666"/></svg>
<div id="t89" class="t" style="left:47px;top:322.00px;font-size:13px;font-weight:700;color:#777;letter-spacing:0.281px;">Berichte</div>
<svg style="position:absolute;left:108px;top:320.5px;" width="14" height="14" viewBox="0 0 14 14"><circle cx="7" cy="7" r="7" fill="#28a745"/><polyline points="3.4,7.4 5.9,9.7 10.6,4.9" fill="none" stroke="#fff" stroke-width="1.9" stroke-linecap="round" stroke-linejoin="round"/></svg>
<svg style="position:absolute;left:22px;top:354.5px;" width="16" height="16" viewBox="0 0 16 16"><circle cx="8" cy="8" r="6.4" fill="none" stroke="#666" stroke-width="1.4"/><circle cx="8" cy="8" r="2.1" fill="#666"/></svg>
<div id="t90" class="t" style="left:47px;top:357.00px;font-size:13px;font-weight:700;color:#777;letter-spacing:0.519px;">Anlagen/Dokumente</div>
<svg style="position:absolute;left:188.75px;top:355.5px;" width="14" height="14" viewBox="0 0 14 14"><circle cx="7" cy="7" r="7" fill="#28a745"/><polyline points="3.4,7.4 5.9,9.7 10.6,4.9" fill="none" stroke="#fff" stroke-width="1.9" stroke-linecap="round" stroke-linejoin="round"/></svg>
<svg style="position:absolute;left:322px;top:356.5px;" width="12" height="12" viewBox="0 0 12 12"><polyline points="7.4,2.8 4.6,6 7.4,9.2" fill="none" stroke="#777" stroke-width="2" stroke-linecap="round" stroke-linejoin="round"/></svg>
<svg style="position:absolute;left:35px;top:389.5px;" width="16" height="16" viewBox="0 0 16 16"><circle cx="8" cy="8" r="6.4" fill="none" stroke="#666" stroke-width="1.4"/></svg>
<div id="t91" class="t" style="left:60px;top:392.00px;font-size:13px;font-weight:400;color:#777;letter-spacing:0.356px;">Projektträger:in</div>
<svg style="position:absolute;left:161px;top:390.5px;" width="14" height="14" viewBox="0 0 14 14"><circle cx="7" cy="7" r="7" fill="#28a745"/><polyline points="3.4,7.4 5.9,9.7 10.6,4.9" fill="none" stroke="#fff" stroke-width="1.9" stroke-linecap="round" stroke-linejoin="round"/></svg>
<svg style="position:absolute;left:35px;top:424.5px;" width="16" height="16" viewBox="0 0 16 16"><circle cx="8" cy="8" r="6.4" fill="none" stroke="#666" stroke-width="1.4"/></svg>
<div id="t92" class="t" style="left:60px;top:427.00px;font-size:13px;font-weight:400;color:#777;letter-spacing:0.260px;">Förderstelle</div>
<svg style="position:absolute;left:139px;top:425.5px;" width="14" height="14" viewBox="0 0 14 14"><circle cx="7" cy="7" r="7" fill="#28a745"/><polyline points="3.4,7.4 5.9,9.7 10.6,4.9" fill="none" stroke="#fff" stroke-width="1.9" stroke-linecap="round" stroke-linejoin="round"/></svg>
<svg style="position:absolute;left:22px;top:459.5px;" width="16" height="16" viewBox="0 0 16 16"><circle cx="8" cy="8" r="6.4" fill="none" stroke="#666" stroke-width="1.4"/><circle cx="8" cy="8" r="2.1" fill="#666"/></svg>
<div id="t93" class="t" style="left:47px;top:462.00px;font-size:13px;font-weight:700;color:#777;letter-spacing:0.416px;">Bewertung</div>
<svg style="position:absolute;left:125px;top:460.5px;" width="14" height="14" viewBox="0 0 14 14"><circle cx="7" cy="7" r="7" fill="#28a745"/><polyline points="3.4,7.4 5.9,9.7 10.6,4.9" fill="none" stroke="#fff" stroke-width="1.9" stroke-linecap="round" stroke-linejoin="round"/></svg>
<svg style="position:absolute;left:322px;top:461.5px;" width="12" height="12" viewBox="0 0 12 12"><polyline points="7.4,2.8 4.6,6 7.4,9.2" fill="none" stroke="#777" stroke-width="2" stroke-linecap="round" stroke-linejoin="round"/></svg>
<svg style="position:absolute;left:22px;top:495.5px;" width="16" height="16" viewBox="0 0 16 16"><circle cx="8" cy="8" r="6.4" fill="none" stroke="#666" stroke-width="1.4"/></svg>
<div id="t94" class="t" style="left:47px;top:498.00px;font-size:13px;font-weight:700;color:#777;letter-spacing:0.180px;">Korrespondenz</div>
<svg style="position:absolute;left:152px;top:496.5px;" width="14" height="14" viewBox="0 0 14 14"><circle cx="7" cy="7" r="7" fill="#28a745"/><polyline points="3.4,7.4 5.9,9.7 10.6,4.9" fill="none" stroke="#fff" stroke-width="1.9" stroke-linecap="round" stroke-linejoin="round"/></svg>
</body></html>
